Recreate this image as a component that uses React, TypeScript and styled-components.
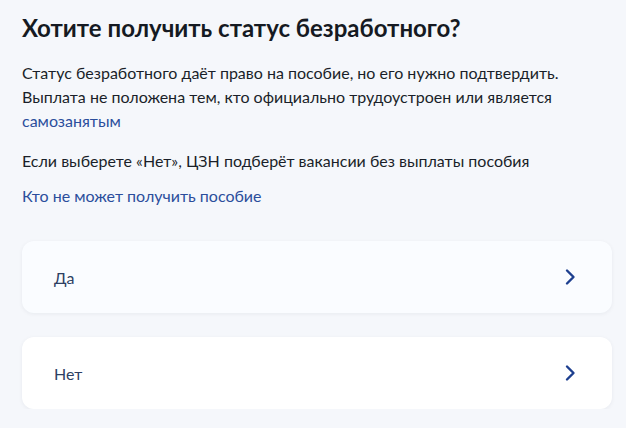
import React from "react";
import styled, { createGlobalStyle } from "styled-components";

const GlobalStyle = createGlobalStyle`
  html, body {
    margin: 0;
    padding: 0;
    background: #f5f7fb;
  }
  body {
    font-family: Lato, "Noto Sans", sans-serif;
    color: #1a1f29;
  }
`;

const Page = styled.div`
  padding: 12px 14px 0 22px;
  display: flex;
  flex-direction: column;
`;

const Title = styled.h1`
  margin: 0 0 17px;
  font-size: 24px;
  line-height: 32px;
  font-weight: 700;
  color: #151a22;
`;

const Text = styled.p<{ $gap?: number }>`
  margin: 0 0 ${(p) => p.$gap ?? 0}px;
  font-size: 16px;
  line-height: 24px;
  color: #1a1f29;
`;

const Link = styled.a`
  color: #2b4e9c;
  text-decoration: none;
  cursor: pointer;
`;

const Options = styled.div`
  margin-top: 33px;
  display: flex;
  flex-direction: column;
  gap: 24px;
`;

const Option = styled.button<{ $active?: boolean }>`
  display: flex;
  align-items: center;
  justify-content: space-between;
  height: 72px;
  padding: 0 36px 0 32px;
  border: none;
  border-radius: 12px;
  background: ${(p) => (p.$active ? "#fafcff" : "#ffffff")};
  box-shadow: 0 1px 4px rgba(11, 31, 51, 0.06);
  font-family: inherit;
  font-size: 16px;
  color: #2d3f63;
  text-align: left;
  cursor: pointer;
`;

const Chevron = () => (
  <svg width="12" height="20" viewBox="0 0 12 20" fill="none">
    <path
      d="M3 3.5 9.5 10 3 16.5"
      stroke="#1d3f8f"
      strokeWidth="2.4"
      strokeLinecap="round"
      strokeLinejoin="round"
    />
  </svg>
);

export default function App() {
  return (
    <>
      <GlobalStyle />
      <Page>
        <Title>Хотите получить статус безработного?</Title>
        <Text $gap={16}>
          Статус безработного даёт право на пособие, но его нужно подтвердить.
          Выплата не положена тем, кто официально трудоустроен или является{" "}
          <Link>самозанятым</Link>
        </Text>
        <Text $gap={11}>
          Если выберете «Нет», ЦЗН подберёт вакансии без выплаты пособия
        </Text>
        <Text>
          <Link>Кто не может получить пособие</Link>
        </Text>
        <Options>
          <Option $active>
            <span>Да</span>
            <Chevron />
          </Option>
          <Option>
            <span>Нет</span>
            <Chevron />
          </Option>
        </Options>
      </Page>
    </>
  );
}
